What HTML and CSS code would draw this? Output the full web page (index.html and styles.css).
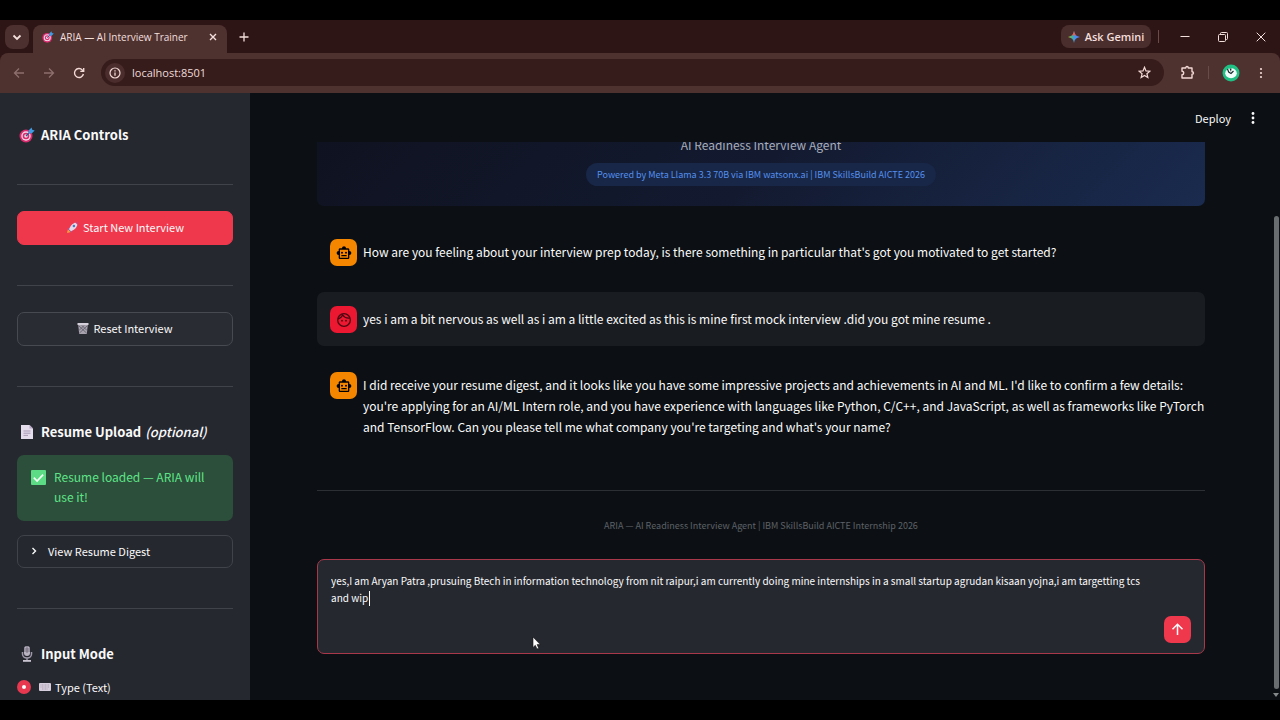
FILE: index.html
```
<!DOCTYPE html>
<html lang="en">
<head>
  <meta charset="UTF-8">
  <meta name="viewport" content="width=device-width, initial-scale=1.0">
  <title>ARIA — AI Interview Trainer</title>
  <link rel="stylesheet" href="styles.css">
</head>
<body>
  <!-- Shared emoji art -->
  <svg class="defs" aria-hidden="true">
    <symbol id="target" viewBox="0 0 16 16">
      <circle cx="7" cy="9" r="6.5" fill="#d92b6d"/>
      <circle cx="7" cy="9" r="4.7" fill="#f3d5e6"/>
      <circle cx="7" cy="9" r="3.3" fill="#d92b6d"/>
      <circle cx="7" cy="9" r="1.8" fill="#f3d5e6"/>
      <path d="M7 9l5-5" stroke="#31578f" stroke-width="1.2"/>
      <path d="M9.6 6.4L9.8 3.2 12.6.4l.6 2.4 2.5.6-2.8 2.9z" fill="#3f9be3"/>
    </symbol>
    <symbol id="robot" viewBox="0 0 24 24">
      <path fill-rule="evenodd" d="M20 9V7c0-1.1-.9-2-2-2h-3c0-1.66-1.34-3-3-3S9 3.34 9 5H6c-1.1 0-2 .9-2 2v2c-1.66 0-3 1.34-3 3s1.34 3 3 3v4c0 1.1.9 2 2 2h12c1.1 0 2-.9 2-2v-4c1.66 0 3-1.34 3-3s-1.34-3-3-3zm-2 10H6V7h12v12zM9 10a1.5 1.5 0 1 0 0 3 1.5 1.5 0 0 0 0-3zm6 0a1.5 1.5 0 1 0 0 3 1.5 1.5 0 0 0 0-3zM8 15h8v2H8z"/>
    </symbol>
  </svg>

  <div class="browser">
    <!-- Tab strip -->
    <div class="tab-strip">
      <button class="tab-search" aria-label="Search tabs">
        <svg width="12" height="12" viewBox="0 0 12 12"><path d="M2.5 4.5L6 8l3.500-3.500" fill="none" stroke="currentColor" stroke-width="1.8"/></svg>
      </button>
      <div class="tab">
        <svg width="12" height="12"><use href="#target"/></svg>
        <span>ARIA — AI Interview Trainer</span>
        <button class="tab-close" aria-label="Close tab">
          <svg width="8" height="8" viewBox="0 0 8 8"><path d="M1 1l6 6M7 1L1 7" stroke="currentColor" stroke-width="1.4"/></svg>
        </button>
      </div>
      <button class="new-tab" aria-label="New tab">
        <svg width="10" height="10" viewBox="0 0 10 10"><path d="M5 .5v9M.5 5h9" stroke="currentColor" stroke-width="1.3"/></svg>
      </button>
      <button class="gemini">
        <svg width="12" height="12" viewBox="0 0 12 12">
          <defs><linearGradient id="gem" x1="0" y1="0" x2="1" y2="0"><stop offset="0" stop-color="#f2c230"/><stop offset=".3" stop-color="#41b883"/><stop offset=".6" stop-color="#4a8df6"/><stop offset="1" stop-color="#5a7df0"/></linearGradient></defs>
          <path d="M6 0c.5 3.6 2.4 5.5 6 6-3.600.5-5.500 2.400-6 6-.5-3.600-2.400-5.500-6-6C3.600 5.500 5.500 3.600 6 0z" fill="url(#gem)"/>
          <path d="M6 0c.2 1.5.7 2.700 1.500 3.700L6 5 4.500 3.700C5.300 2.700 5.800 1.500 6 0z" fill="#ec5b52"/>
        </svg>
        Ask Gemini
      </button>
      <span class="divider"></span>
      <div class="window-buttons">
        <button aria-label="Minimize"><svg width="10" height="10" viewBox="0 0 10 10"><path d="M.5 4.5h9" stroke="currentColor"/></svg></button>
        <button aria-label="Restore"><svg width="10" height="10" viewBox="0 0 10 10" fill="none" stroke="currentColor"><rect x=".5" y="2.5" width="7" height="7" rx="1"/><path d="M2.5 2.500V1.500q0-1 1-1h5q1 0 1 1v5q0 1-1 1h-1"/></svg></button>
        <button aria-label="Close"><svg width="10" height="10" viewBox="0 0 10 10"><path d="M.7.7l8.600 8.600M9.300.7L.7 9.300" stroke="currentColor"/></svg></button>
      </div>
    </div>

    <!-- Toolbar with the address bar -->
    <div class="toolbar">
      <button class="nav-btn dim" aria-label="Back"><svg width="12" height="12" viewBox="0 0 12 12"><path d="M11 6H1.500M6 1.500L1.500 6 6 10.500" fill="none" stroke="currentColor" stroke-width="1.3"/></svg></button>
      <button class="nav-btn dim" aria-label="Forward"><svg width="12" height="12" viewBox="0 0 12 12"><path d="M1 6h9.500M6 1.500L10.500 6 6 10.500" fill="none" stroke="currentColor" stroke-width="1.3"/></svg></button>
      <button class="nav-btn" aria-label="Reload"><svg width="12" height="12" viewBox="0 0 12 12"><path d="M10.4 7A4.500 4.500 0 1 1 9.300 2.900L10.500 4M10.700 1v3.400H7.300" fill="none" stroke="currentColor" stroke-width="1.4"/></svg></button>
      <div class="address">
        <button class="site-info" aria-label="Site information"><svg width="12" height="12" viewBox="0 0 12 12"><circle cx="6" cy="6" r="5" fill="none" stroke="currentColor" stroke-width="1.2"/><path d="M6 5.400v3.300M6 3.200v1.300" stroke="currentColor" stroke-width="1.3"/></svg></button>
        <input type="text" value="localhost:8501" aria-label="Address">
        <button class="star" aria-label="Bookmark"><svg width="13" height="13" viewBox="0 0 14 14"><path d="M7 1.400l1.600 3.900 4.200.3-3.200 2.700 1 4.100L7 10.200l-3.600 2.200 1-4.100-3.200-2.700 4.200-.3z" fill="none" stroke="currentColor" stroke-width="1.3"/></svg></button>
      </div>
      <button class="tool puzzle" aria-label="Extensions"><svg width="15" height="15" viewBox="0 0 15 15"><path d="M2 3h3.700c0-2 2.600-2 2.600 0H12v3.800c2 0 2 2.400 0 2.400V13H2v-3.200c2.300 0 2.300-3.600 0-3.600z" fill="none" stroke="currentColor" stroke-width="1.4" stroke-linejoin="round"/></svg></button>
      <span class="divider"></span>
      <button class="tool" aria-label="Profile"><svg width="18" height="18" viewBox="0 0 18 18"><circle cx="9" cy="9" r="8.5" fill="#20bf83"/><ellipse cx="9" cy="9.2" rx="5.8" ry="5" fill="#f1fffb"/><path d="M5.500 5l1.200 3L9 9.500l2.500-2.500" fill="none" stroke="#142b2b" stroke-width="1.2"/><path d="M7.500 4.500h2L9 8z" fill="#142b2b"/></svg></button>
      <button class="tool kebab" aria-label="Browser menu"><svg width="4" height="12" viewBox="0 0 4 12" fill="currentColor"><circle cx="2" cy="2" r="1.1"/><circle cx="2" cy="6" r="1.1"/><circle cx="2" cy="10" r="1.1"/></svg></button>
    </div>

    <!-- Streamlit app -->
    <div class="app">
      <aside class="sidebar">
        <h2 class="sidebar-title"><svg width="16" height="16"><use href="#target"/></svg>ARIA Controls</h2>
        <hr>
        <button class="btn primary">
          <svg width="13" height="13" viewBox="0 0 13 13"><path d="M1 12l1-4 3 3z" fill="#f8a13a"/><path d="M3.300 6.500L1.500 8l3.600 3.600 1.600-2.200z" fill="#a9569c"/><path d="M3 8.200Q5 2 12 1q-.6 7-7 9.200z" fill="#e3d8ea"/><path d="M8.700.9Q10.500.5 12.300.7q.2 1.800-.2 3.500z" fill="#d5426f"/><circle cx="7.9" cy="5" r="1.3" fill="#4979bd"/></svg>
          Start New Interview
        </button>
        <hr>
        <button class="btn">
          <svg width="12" height="13" viewBox="0 0 12 13"><path d="M1.200 2.500h9.600L9.800 12H2.200z" fill="#a7a2ae"/><path d="M.5 1h11v2H.5z" fill="#d5d0dc"/><path d="M2 4l7.500 7M5 3.500l5 5M10 4l-7.500 7M7 3.500l-5 5" stroke="#5d5966" stroke-width=".8"/></svg>
          Reset Interview
        </button>
        <hr>
        <h2><svg width="16" height="16" viewBox="0 0 16 16"><path d="M2 1h8.500L14 4.500V15H2z" fill="#e5dcec"/><path d="M10.500 1v3.500H14z" fill="#b8a9c7"/><path d="M4.500 7h7M4.500 9.200h7M4.500 11.400h4.500" stroke="#a99bb5"/></svg>Resume Upload <em>(optional)</em></h2>
        <div class="alert" role="status">
          <svg width="15" height="15" viewBox="0 0 15 15"><rect width="15" height="15" rx="1" fill="#5cdc85"/><path d="M2.800 7.600l3.300 3.400 6-6.400" fill="none" stroke="#f2fff5" stroke-width="1.7"/></svg>
          <p>Resume loaded — ARIA will use it!</p>
        </div>
        <details>
          <summary><svg width="8" height="8" viewBox="0 0 8 8"><path d="M2.500 1L5.500 4l-3 3" fill="none" stroke="currentColor" stroke-width="1.4"/></svg>View Resume Digest</summary>
        </details>
        <hr>
        <h2><svg width="16" height="16" viewBox="0 0 16 16"><rect x="5" y="0" width="6" height="10" rx="3" fill="#b9b3c2"/><path d="M5 3h6M5 5h6M8 0v7" stroke="#686370" stroke-width=".8"/><path d="M3.500 6v2a4.500 4 0 0 0 9 0V6M8 12v2" fill="none" stroke="#9f99a9" stroke-width="1.5"/><path d="M4 14h8v1.800H4z" fill="#cac4d1"/></svg>Input Mode</h2>
        <label class="radio">
          <input type="radio" name="mode" checked>
          <svg width="12" height="8" viewBox="0 0 12 8"><rect width="12" height="8" rx="1" fill="#d7cedd"/><path d="M1.500 2h9M1.500 4h9M3 6h6" stroke="#aaa0b2" stroke-dasharray="1 .5"/></svg>
          Type (Text)
        </label>
      </aside>

      <main class="main">
        <header class="app-header">
          <button class="deploy">Deploy</button>
          <button class="app-menu" aria-label="App menu"><svg width="4" height="14" viewBox="0 0 4 14" fill="currentColor"><circle cx="2" cy="2.5" r="1.4"/><circle cx="2" cy="7" r="1.4"/><circle cx="2" cy="11.5" r="1.4"/></svg></button>
        </header>
        <div class="scroll">
          <div class="content">
            <section class="banner">
              <p class="subtitle">AI Readiness Interview Agent</p>
              <span class="pill">Powered by Meta Llama 3.3 70B via IBM watsonx.ai | IBM SkillsBuild AICTE 2026</span>
            </section>

            <div class="messages">
              <article class="message">
                <span class="avatar bot"><svg width="16" height="16"><use href="#robot"/></svg></span>
                <p>How are you feeling about your interview prep today, is there something in particular that's got you motivated to get started?</p>
              </article>
              <article class="message from-user">
                <span class="avatar user"><svg width="16" height="16" viewBox="0 0 24 24"><circle cx="12" cy="12" r="9.5" fill="none" stroke="currentColor" stroke-width="2"/><path d="M3 10.500C6.500 9.500 8.700 7.500 10 4.500c2.200 3.500 5.500 5 10.500 4.500" fill="none" stroke="currentColor" stroke-width="2"/><circle cx="9" cy="13" r="1.4" fill="currentColor"/><circle cx="15" cy="13" r="1.4" fill="currentColor"/></svg></span>
                <p>yes i am a bit nervous as well as i am a little excited as this is mine first mock interview .did you got mine resume .</p>
              </article>
              <article class="message">
                <span class="avatar bot"><svg width="16" height="16"><use href="#robot"/></svg></span>
                <p>I did receive your resume digest, and it looks like you have some impressive projects and achievements in AI and ML. I'd like to confirm a few details: you're applying for an AI/ML Intern role, and you have experience with languages like Python, C/C++, and JavaScript, as well as frameworks like PyTorch and TensorFlow. Can you please tell me what company you're targeting and what's your name?</p>
              </article>
            </div>

            <hr>
            <p class="caption">ARIA — AI Readiness Interview Agent | IBM SkillsBuild AICTE Internship 2026</p>

            <form class="chat-input">
              <textarea aria-label="Your answer" spellcheck="false">yes,I am Aryan Patra ,prusuing Btech in information technology from nit raipur,i am currently doing mine internships in a small startup agrudan kisaan yojna,i am targetting tcs and wip</textarea>
              <span class="caret"></span>
              <button type="button" class="send" aria-label="Send"><svg width="13" height="13" viewBox="0 0 13 13"><path d="M6.500 12V1.500M1.500 6.300l5-5 5 5" fill="none" stroke="currentColor" stroke-width="1.5"/></svg></button>
              <svg class="pointer" width="9" height="14" viewBox="0 0 9 14"><path d="M1 1v10.500l2.300-2.200L5 13l1.700-.8-1.600-3.600h3.200z" fill="#fff" stroke="#111" stroke-width=".6"/></svg>
            </form>
          </div>
        </div>
        <div class="scrollbar"><span class="thumb"></span><span class="arrow"></span></div>
      </main>
    </div>
  </div>
</body>
</html>
```

FILE: styles.css
```
* {
  box-sizing: border-box;
}

body {
  margin: 0;
  height: 100vh;
  padding: 20px 0;
  background: #000;
  color: #fafafa;
  font-family: "Noto Sans CJK SC", "Open Sans", sans-serif;
  font-size: 12px;
  overflow: hidden;
}

.defs {
  display: none;
}

button {
  display: flex;
  align-items: center;
  justify-content: center;
  padding: 0;
  border: none;
  background: none;
  color: inherit;
  font: inherit;
}

h2,
p {
  margin: 0;
}

svg {
  flex-shrink: 0;
}

.browser {
  height: 100%;
  display: flex;
  flex-direction: column;
  background: #2e1515;
}

/* Tab strip */
.tab-strip {
  display: flex;
  align-items: center;
  height: 33px;
  flex-shrink: 0;
  color: #f3dfdc;
  font-family: "Open Sans", sans-serif;
  font-size: 11px;
}

.tab-search {
  width: 24px;
  height: 24px;
  margin: 0 4px 0 5px;
  border-radius: 8px;
  background: #4c302f;
}

.tab {
  display: flex;
  align-items: center;
  gap: 6px;
  width: 194px;
  height: 28px;
  margin-top: 5px;
  padding: 0 8px 4px 9px;
  border-radius: 8px 8px 0 0;
  background: #4e3230;
  font-size: 10px;
}

.tab span {
  flex: 1;
  white-space: nowrap;
}

.tab-close {
  width: 12px;
  height: 12px;
}

.new-tab {
  width: 24px;
  height: 24px;
  margin-left: 5px;
}

.gemini {
  gap: 5px;
  width: 90px;
  height: 23px;
  margin-left: auto;
  border-radius: 8px;
  background: #4a2e2d;
  font-weight: 600;
}

.divider {
  width: 1px;
  height: 13px;
  background: #694b49;
}

.tab-strip .divider {
  margin: 0 7px;
}

.window-buttons {
  display: flex;
}

.window-buttons button {
  width: 38px;
  height: 24px;
}

/* Toolbar */
.toolbar {
  display: flex;
  align-items: center;
  height: 40px;
  flex-shrink: 0;
  padding: 0 8px 1px 4px;
  border-radius: 8px 8px 0 0;
  background: #4e3230;
  color: #f3d9d6;
}

.nav-btn {
  width: 30px;
  height: 28px;
}

.dim {
  color: #8d706e;
}

.address {
  display: flex;
  align-items: center;
  flex: 1;
  height: 27px;
  margin: 0 12px 0 7px;
  padding: 0 13px 0 4px;
  border-radius: 14px;
  background: #371c1c;
}

.site-info {
  width: 20px;
  height: 20px;
  border-radius: 50%;
  background: #4a2d2c;
}

.address input {
  flex: 1;
  padding: 0 7px;
  border: none;
  outline: none;
  background: none;
  color: #eedbd8;
  font-family: "Open Sans", sans-serif;
  font-size: 11px;
}

.tool {
  width: 22px;
  height: 24px;
}

.puzzle {
  margin-right: 10px;
}

.toolbar .divider {
  margin-right: 11px;
}

.kebab {
  margin-left: 8px;
}

/* App */
.app {
  flex: 1;
  display: flex;
  min-height: 0;
  background: #0c1014;
}

hr {
  height: 1px;
  margin: 40px 0 26px;
  border: none;
  background: #41434b;
}

/* Sidebar */
.sidebar {
  width: 250px;
  flex-shrink: 0;
  padding: 23px 17px 0;
  overflow: hidden;
  background: #262830;
}

.sidebar h2 {
  display: flex;
  align-items: center;
  gap: 4px;
  padding: 7px 0 11px 2px;
  font-size: 13px;
  font-weight: 700;
  line-height: 24px;
  white-space: nowrap;
}

.sidebar h2 em {
  font-weight: 500;
}

.sidebar-title + hr {
  margin-top: 26px;
}

.sidebar h2 svg {
  margin-right: 2px;
}

.btn {
  gap: 4px;
  width: 100%;
  height: 34px;
  padding-bottom: 2px;
  border: 1px solid #484a52;
  border-radius: 7px;
  background: #2a2c34;
  font-size: 11px;
}

.primary {
  border-color: #f0384d;
  background: #f0384d;
}

.alert {
  display: flex;
  gap: 8px;
  padding: 12px 14px 14px;
  border-radius: 7px;
  background: #2b4f3a;
  color: #5fe488;
  line-height: 20px;
}

.alert svg {
  margin-top: 3px;
}

details {
  margin-top: 14px;
  border: 1px solid #41434b;
  border-radius: 7px;
  font-size: 11px;
}

summary {
  display: flex;
  align-items: center;
  gap: 10px;
  height: 31px;
  padding: 0 12px 2px;
}

.radio {
  display: flex;
  align-items: center;
  gap: 4px;
  font-size: 11px;
  line-height: 20px;
}

.radio input {
  appearance: none;
  width: 14px;
  height: 14px;
  margin: 0 4px 0 0;
  border: 5px solid #e8384f;
  border-radius: 50%;
  background: #fff;
}

/* Main area */
.main {
  flex: 1;
  min-width: 0;
  display: grid;
  grid-template-columns: 1fr 8px;
  grid-template-rows: 49px 1fr;
}

.app-header {
  grid-column: 1 / 3;
  display: flex;
  align-items: center;
  justify-content: flex-end;
  gap: 20px;
  padding-right: 25px;
}

.deploy {
  font-size: 11px;
}

.scroll {
  min-height: 0;
  overflow: hidden;
}

.content {
  padding: 0 67px;
}

.content hr {
  margin: 40px 0 26px;
  background: #2c3035;
}

.banner {
  display: flex;
  flex-direction: column;
  align-items: center;
  gap: 8px;
  margin-top: -7px;
  padding-bottom: 20px;
  border-radius: 0 0 7px 7px;
  background: linear-gradient(135deg, #0f1220, #131a30 50%, #1a2b4f);
}

.subtitle {
  color: #a8adb7;
  line-height: 20px;
}

.pill {
  padding: 0 11px;
  border-radius: 12px;
  background: #182747;
  color: #5590ee;
  font-size: 9px;
  line-height: 23px;
}

.messages {
  display: flex;
  flex-direction: column;
  gap: 13px;
  margin-top: 20px;
}

.message {
  display: flex;
  gap: 6px;
  padding: 13px 0 13px 13px;
  border-radius: 7px;
  line-height: 21px;
}

/* The text may run right up to the column edge */
.message p {
  margin-right: -6px;
  padding-top: 2px;
}

.from-user {
  padding-top: 14px;
  background: #191c21;
}

.avatar {
  display: flex;
  align-items: center;
  justify-content: center;
  width: 27px;
  height: 27px;
  flex-shrink: 0;
  border-radius: 7px;
  color: #241205;
}

.bot {
  background: #f58700;
}

.user {
  background: #ec1731;
  color: #4b0710;
}

.caption {
  color: #5d6167;
  font-size: 9px;
  line-height: 18px;
  text-align: center;
}

.chat-input {
  position: relative;
  display: flex;
  align-items: flex-end;
  height: 95px;
  margin-top: 24px;
  padding: 12px 13px 13px;
  border: 1px solid #a8384a;
  border-radius: 7px;
  background: #262830;
}

.chat-input textarea {
  flex: 1;
  height: 100%;
  padding: 0 16px 0 0;
  border: none;
  outline: none;
  resize: none;
  overflow: hidden;
  background: none;
  color: inherit;
  font: inherit;
  font-size: 10px;
  line-height: 17px;
}

.send {
  width: 27px;
  height: 27px;
  margin-bottom: -3px;
  border-radius: 7px;
  background: #f0384d;
}

/* Text caret and mouse pointer lie over the input */
.caret {
  position: absolute;
  left: 51px;
  top: 31px;
  width: 1px;
  height: 15px;
  background: #fff;
}

.pointer {
  position: absolute;
  left: 214px;
  top: 76px;
}

.scrollbar {
  display: flex;
  flex-direction: column;
  align-items: center;
  padding: 74px 0 3px;
}

.thumb {
  flex: 1;
  width: 5px;
  margin-bottom: 4px;
  border-radius: 3px;
  background: #696d70;
}

.arrow {
  border: 3px solid transparent;
  border-top: 4px solid #85888b;
  border-bottom: none;
}
```
